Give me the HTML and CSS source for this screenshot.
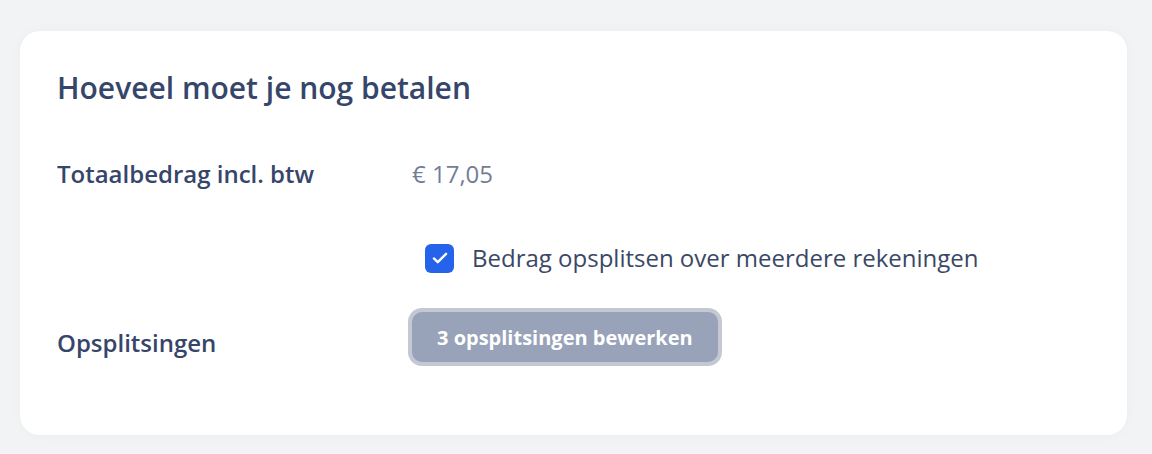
FILE: index.html
```html
<!DOCTYPE html>
<html lang="nl">
<head>
<meta charset="utf-8">
<title>Hoeveel moet je nog betalen</title>
<link rel="stylesheet" href="styles.css">
</head>
<body>
<div class="page">
  <section class="card">
    <h2 class="title">Hoeveel moet je nog betalen</h2>
    <div class="row row-total">
      <div class="label">Totaalbedrag incl. btw</div>
      <div class="value">€ 17,05</div>
    </div>
    <div class="row row-check">
      <div class="label"></div>
      <label class="check">
        <span class="box">
          <svg viewBox="0 0 16 16" width="18" height="18"><path d="M2.6 8.4l3.4 3.3 7.4-7.4" fill="none" stroke="#fff" stroke-width="2.1" stroke-linecap="round" stroke-linejoin="round"/></svg>
        </span>
        <span class="check-text">Bedrag opsplitsen over meerdere rekeningen</span>
      </label>
    </div>
    <div class="row row-split">
      <div class="label label-split">Opsplitsingen</div>
      <button class="btn" type="button">3 opsplitsingen bewerken</button>
    </div>
  </section>
</div>
</body>
</html>
```
FILE: styles.css
```css
html, body {
  margin: 0;
  padding: 0;
}
body {
  background: #f2f3f5;
  font-family: "Open Sans", "Noto Sans", sans-serif;
  color: #36466a;
}
.page {
  padding: 31px 25px 19px 20px;
}
.card {
  background: #fff;
  border-radius: 20px;
  height: 404px;
  box-sizing: border-box;
  padding: 37px 36px 0 37px;
  box-shadow: 0 0 12px rgba(30, 40, 70, 0.03);
}
.title {
  margin: 0;
  font-size: 30px;
  line-height: 40px;
  font-weight: 600;
  color: #36466a;
}
.row {
  display: flex;
}
.label {
  width: 355px;
  flex: none;
  font-size: 24px;
  line-height: 32px;
  font-weight: 600;
  color: #36466a;
}
.row-total {
  margin-top: 50px;
  align-items: center;
}
.value {
  font-size: 24px;
  line-height: 32px;
  color: #737d95;
}
.row-check {
  margin-top: 52px;
  align-items: center;
}
.check {
  display: flex;
  align-items: center;
  margin-left: 13px;
  gap: 18px;
}
.box {
  width: 29px;
  height: 29px;
  border-radius: 6px;
  background: #2563eb;
  display: flex;
  align-items: center;
  justify-content: center;
}
.check-text {
  font-size: 24px;
  line-height: 32px;
  color: #3a4866;
}
.row-split {
  margin-top: 38px;
  align-items: flex-start;
}
.label-split {
  padding-top: 15px;
}
.btn {
  height: 50px;
  padding: 0 25px;
  border: none;
  border-radius: 10px;
  background: #98a2b8;
  box-shadow: 0 0 0 4px #c3c8d2;
  color: #fff;
  font-family: "Open Sans", "Noto Sans", sans-serif;
  font-size: 20px;
  font-weight: 700;
}
```
